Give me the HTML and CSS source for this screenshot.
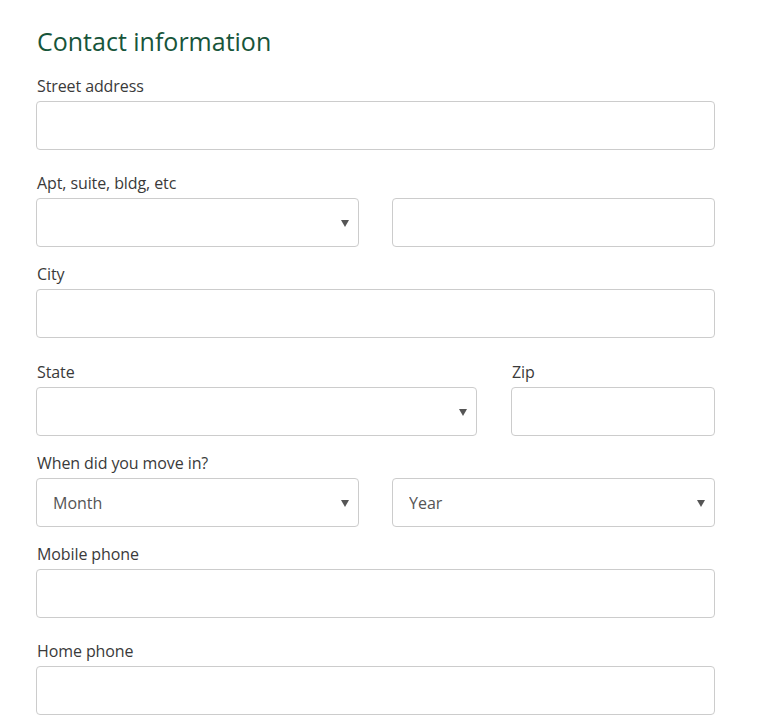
FILE: index.html
```html
<!DOCTYPE html>
<html lang="en">
<head>
<meta charset="utf-8">
<title>Contact information</title>
<link rel="stylesheet" href="styles.css">
</head>
<body>
<main class="page">
  <h2 class="title">Contact information</h2>

  <div class="group group-wide">
    <label class="label" for="street">Street address</label>
    <input class="control" id="street" type="text">
  </div>

  <div class="group">
    <label class="label" for="apt">Apt, suite, bldg, etc</label>
    <div class="row-half">
      <div class="select-wrap">
        <select class="control select" id="apt"><option></option></select>
      </div>
      <input class="control" type="text" aria-label="Apt number">
    </div>
  </div>

  <div class="group group-wide group-city">
    <label class="label" for="city">City</label>
    <input class="control" id="city" type="text">
  </div>

  <div class="group">
    <div class="row-state">
      <div>
        <label class="label" for="state">State</label>
        <div class="select-wrap">
          <select class="control select" id="state"><option></option></select>
        </div>
      </div>
      <div>
        <label class="label" for="zip">Zip</label>
        <input class="control" id="zip" type="text">
      </div>
    </div>
  </div>

  <div class="group">
    <label class="label" for="month">When did you move in?</label>
    <div class="row-half">
      <div class="select-wrap">
        <select class="control select" id="month"><option>Month</option></select>
      </div>
      <div class="select-wrap">
        <select class="control select" aria-label="Year"><option>Year</option></select>
      </div>
    </div>
  </div>

  <div class="group group-wide">
    <label class="label" for="mobile">Mobile phone</label>
    <input class="control" id="mobile" type="text">
  </div>

  <div class="group">
    <label class="label" for="home">Home phone</label>
    <input class="control" id="home" type="text">
  </div>
</main>
</body>
</html>
```

FILE: styles.css
```css
html, body {
  margin: 0;
  padding: 0;
  background: #fff;
}

body {
  font-family: "Open Sans", "Liberation Sans", sans-serif;
  color: #333;
  font-size: 16px;
}

.page {
  width: 679px;
  margin-left: 36px;
  padding-top: 25px;
}

.title {
  margin: 0 0 18px;
  font-size: 25px;
  line-height: 32px;
  font-weight: 400;
  color: #17553a;
  padding-left: 1px;
}

.group {
  margin-bottom: 16px;
}

.group-wide {
  margin-bottom: 22px;
}

.group-city {
  margin-bottom: 23px;
}

.label {
  display: block;
  font-size: 16px;
  line-height: 22px;
  margin-bottom: 4px;
  padding-left: 1px;
  color: #3a3a3a;
  letter-spacing: -0.1px;
}

.control {
  display: block;
  box-sizing: border-box;
  width: 100%;
  height: 49px;
  margin: 0;
  padding: 0 16px;
  border: 1px solid #ccc;
  border-radius: 4px;
  background: #fff;
  font-family: "Open Sans", "Liberation Sans", sans-serif;
  font-size: 16px;
  color: #555;
  outline: none;
}

.select {
  appearance: none;
  -webkit-appearance: none;
  padding-right: 30px;
}

.select-wrap {
  position: relative;
}

.select-wrap::after {
  content: "";
  position: absolute;
  right: 10px;
  top: 50%;
  margin-top: -3px;
  width: 0;
  height: 0;
  border-left: 4px solid transparent;
  border-right: 4px solid transparent;
  border-top: 7px solid #555;
  pointer-events: none;
}

.row-half {
  display: grid;
  grid-template-columns: 1fr 1fr;
  column-gap: 33px;
}

.row-state {
  display: grid;
  grid-template-columns: 1fr 204px;
  column-gap: 34px;
}
```
